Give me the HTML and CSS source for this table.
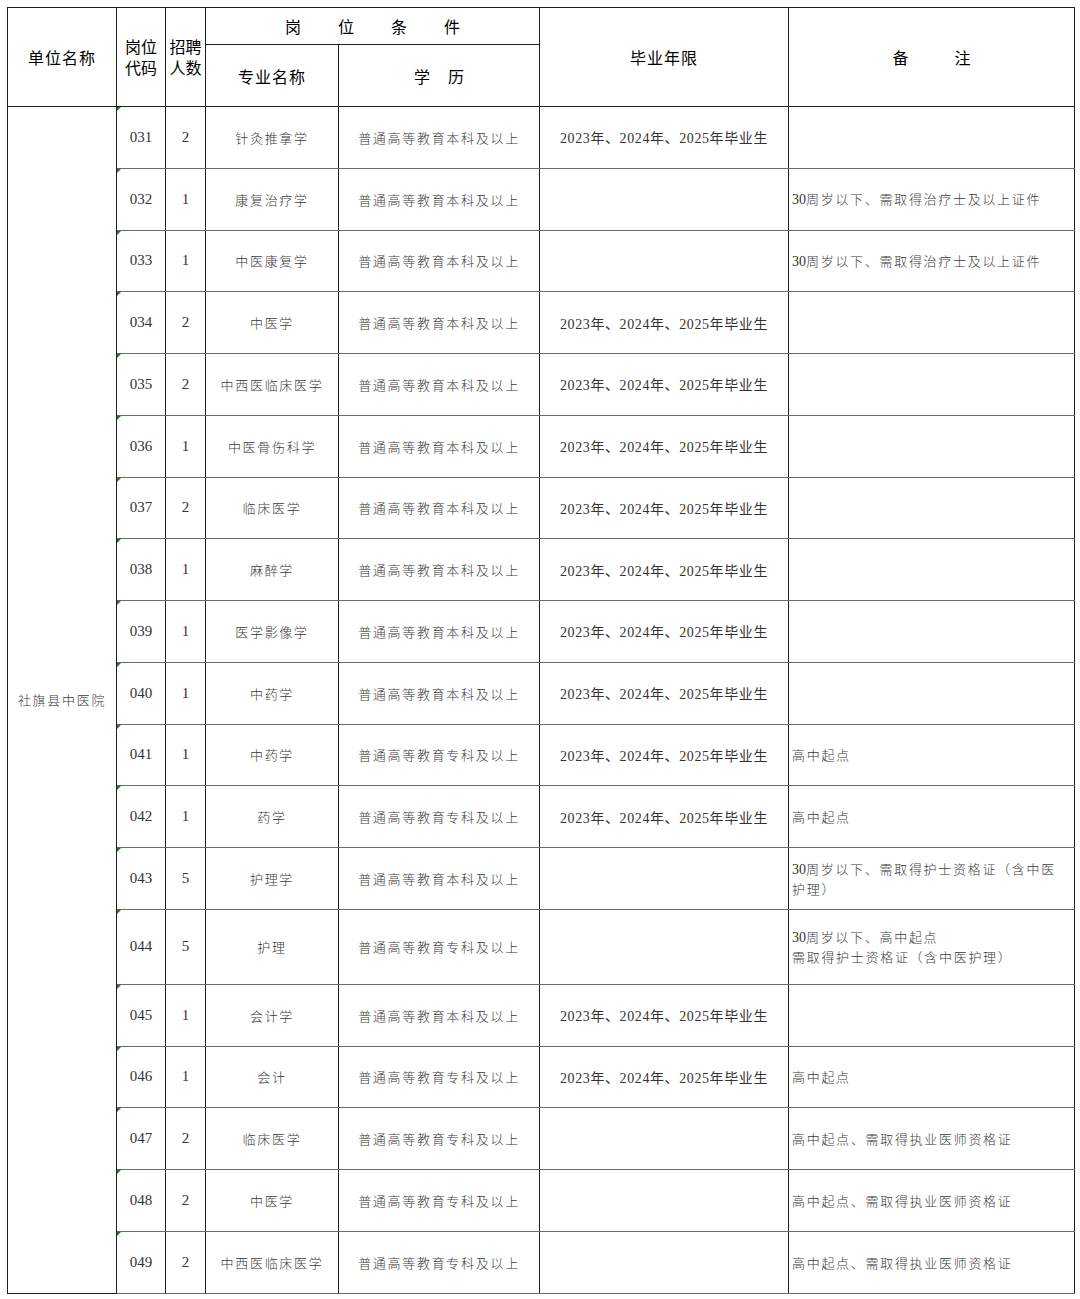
FILE: index.html
```html
<!DOCTYPE html>
<html lang="zh-CN">
<head>
<meta charset="utf-8">
<title>岗位表</title>
<link rel="stylesheet" href="styles.css">
</head>
<body>
<div class="page">
<table class="jobs">
<colgroup>
<col class="c-unit"><col class="c-code"><col class="c-num"><col class="c-major"><col class="c-edu"><col class="c-year"><col class="c-note">
</colgroup>
<thead>
<tr class="h1">
<th rowspan="2" class="hd">单位名称</th>
<th rowspan="2" class="hd two">岗位<br>代码</th>
<th rowspan="2" class="hd two">招聘<br>人数</th>
<th colspan="2" class="hd spread-a">岗位条件</th>
<th rowspan="2" class="hd">毕业年限</th>
<th rowspan="2" class="hd spread-c">备注</th>
</tr>
<tr class="h2">
<th class="hd sub">专业名称</th>
<th class="hd sub spread-b">学历</th>
</tr>
</thead>
<tbody>
<tr><td rowspan="19" class="unit">社旗县中医院</td><td class="code">031</td><td class="num">2</td><td class="txt">针灸推拿学</td><td class="txt">普通高等教育本科及以上</td><td class="year">2023年、2024年、2025年毕业生</td><td class="note"></td></tr>
<tr><td class="code">032</td><td class="num">1</td><td class="txt">康复治疗学</td><td class="txt">普通高等教育本科及以上</td><td class="year"></td><td class="note"><span class="d">30</span>周岁以下、需取得治疗士及以上证件</td></tr>
<tr><td class="code">033</td><td class="num">1</td><td class="txt">中医康复学</td><td class="txt">普通高等教育本科及以上</td><td class="year"></td><td class="note"><span class="d">30</span>周岁以下、需取得治疗士及以上证件</td></tr>
<tr><td class="code">034</td><td class="num">2</td><td class="txt">中医学</td><td class="txt">普通高等教育本科及以上</td><td class="year">2023年、2024年、2025年毕业生</td><td class="note"></td></tr>
<tr><td class="code">035</td><td class="num">2</td><td class="txt">中西医临床医学</td><td class="txt">普通高等教育本科及以上</td><td class="year">2023年、2024年、2025年毕业生</td><td class="note"></td></tr>
<tr><td class="code">036</td><td class="num">1</td><td class="txt">中医骨伤科学</td><td class="txt">普通高等教育本科及以上</td><td class="year">2023年、2024年、2025年毕业生</td><td class="note"></td></tr>
<tr><td class="code">037</td><td class="num">2</td><td class="txt">临床医学</td><td class="txt">普通高等教育本科及以上</td><td class="year">2023年、2024年、2025年毕业生</td><td class="note"></td></tr>
<tr><td class="code">038</td><td class="num">1</td><td class="txt">麻醉学</td><td class="txt">普通高等教育本科及以上</td><td class="year">2023年、2024年、2025年毕业生</td><td class="note"></td></tr>
<tr><td class="code">039</td><td class="num">1</td><td class="txt">医学影像学</td><td class="txt">普通高等教育本科及以上</td><td class="year">2023年、2024年、2025年毕业生</td><td class="note"></td></tr>
<tr><td class="code">040</td><td class="num">1</td><td class="txt">中药学</td><td class="txt">普通高等教育本科及以上</td><td class="year">2023年、2024年、2025年毕业生</td><td class="note"></td></tr>
<tr><td class="code">041</td><td class="num">1</td><td class="txt">中药学</td><td class="txt">普通高等教育专科及以上</td><td class="year">2023年、2024年、2025年毕业生</td><td class="note">高中起点</td></tr>
<tr><td class="code">042</td><td class="num">1</td><td class="txt">药学</td><td class="txt">普通高等教育专科及以上</td><td class="year">2023年、2024年、2025年毕业生</td><td class="note">高中起点</td></tr>
<tr><td class="code">043</td><td class="num">5</td><td class="txt">护理学</td><td class="txt">普通高等教育本科及以上</td><td class="year"></td><td class="note"><span class="d">30</span>周岁以下、需取得护士资格证（含中医<br>护理）</td></tr>
<tr class="tall"><td class="code">044</td><td class="num">5</td><td class="txt">护理</td><td class="txt">普通高等教育专科及以上</td><td class="year"></td><td class="note"><span class="d">30</span>周岁以下、高中起点<br>需取得护士资格证（含中医护理）</td></tr>
<tr><td class="code">045</td><td class="num">1</td><td class="txt">会计学</td><td class="txt">普通高等教育本科及以上</td><td class="year">2023年、2024年、2025年毕业生</td><td class="note"></td></tr>
<tr><td class="code">046</td><td class="num">1</td><td class="txt">会计</td><td class="txt">普通高等教育专科及以上</td><td class="year">2023年、2024年、2025年毕业生</td><td class="note">高中起点</td></tr>
<tr><td class="code">047</td><td class="num">2</td><td class="txt">临床医学</td><td class="txt">普通高等教育专科及以上</td><td class="year"></td><td class="note">高中起点、需取得执业医师资格证</td></tr>
<tr><td class="code">048</td><td class="num">2</td><td class="txt">中医学</td><td class="txt">普通高等教育专科及以上</td><td class="year"></td><td class="note">高中起点、需取得执业医师资格证</td></tr>
<tr><td class="code">049</td><td class="num">2</td><td class="txt">中西医临床医学</td><td class="txt">普通高等教育专科及以上</td><td class="year"></td><td class="note">高中起点、需取得执业医师资格证</td></tr>
</tbody>
</table>
</div>
</body>
</html>
```

FILE: styles.css
```css
html, body {
  margin: 0;
  padding: 0;
  background: #ffffff;
}

.page {
  padding: 7px 0 0 7px;
}

.jobs {
  border-collapse: collapse;
  table-layout: fixed;
  width: 1067px;
  font-family: "Noto Sans CJK SC", "Liberation Serif", sans-serif;
  color: #444;
}

.c-unit { width: 109px; }
.c-code { width: 49px; }
.c-num { width: 40px; }
.c-major { width: 133px; }
.c-edu { width: 201px; }
.c-year { width: 249px; }
.c-note { width: 286px; }

.jobs th,
.jobs td {
  border: 1px solid #1f1f1f;
  padding: 0;
  vertical-align: middle;
  text-align: center;
  overflow: hidden;
}

.jobs tbody td {
  border-top-color: #6a6a6a;
  border-bottom-color: #6a6a6a;
}

.jobs tbody td.code {
  border-left-color: #7a7a7a;
}

.h1 { height: 37px; }
.h2 { height: 62px; }

.jobs th.hd {
  font-family: "Noto Sans CJK SC", sans-serif;
  font-weight: 400;
  font-size: 16px;
  color: #000;
  letter-spacing: 1px;
  line-height: 21px;
  white-space: nowrap;
}

.jobs th.two {
  letter-spacing: 0;
}

.jobs th.sub {
  padding-top: 2px;
}

.jobs th.spread-a {
  letter-spacing: 37px;
  text-indent: 37px;
}

.jobs th.spread-b {
  letter-spacing: 18px;
  text-indent: 18px;
}

.jobs th.spread-c {
  letter-spacing: 46px;
  text-indent: 46px;
}

.jobs tbody tr { height: 61.75px; }
.jobs tbody tr.tall { height: 75px; }

.jobs td.unit,
.jobs td.txt {
  font-size: 13px;
  font-weight: 300;
  letter-spacing: 1.7px;
  color: #3a3a3a;
  white-space: nowrap;
}

.jobs td.unit {
  border-bottom-color: #1f1f1f;
}

.jobs td.code,
.jobs td.num {
  position: relative;
  font-family: "Liberation Serif", serif;
  font-size: 15px;
  color: #333;
}

.jobs td.code::before {
  content: "";
  position: absolute;
  left: 0;
  top: 0;
  width: 0;
  height: 0;
  border-top: 4px solid #1f7a1f;
  border-right: 4px solid transparent;
}

.jobs td.year {
  font-family: "Liberation Serif", "Noto Sans CJK SC", serif;
  font-size: 14px;
  letter-spacing: 0.6px;
  color: #333;
  white-space: nowrap;
}

.jobs td.note {
  text-align: left;
  padding-left: 3px;
  line-height: 19px;
  font-family: "Noto Sans CJK SC", sans-serif;
  font-size: 13px;
  font-weight: 300;
  letter-spacing: 1.7px;
  color: #3a3a3a;
  white-space: nowrap;
}

.jobs td.note .d {
  font-family: "Liberation Serif", serif;
  font-size: 14px;
  font-weight: 400;
  letter-spacing: 0;
  color: #333;
}
```
